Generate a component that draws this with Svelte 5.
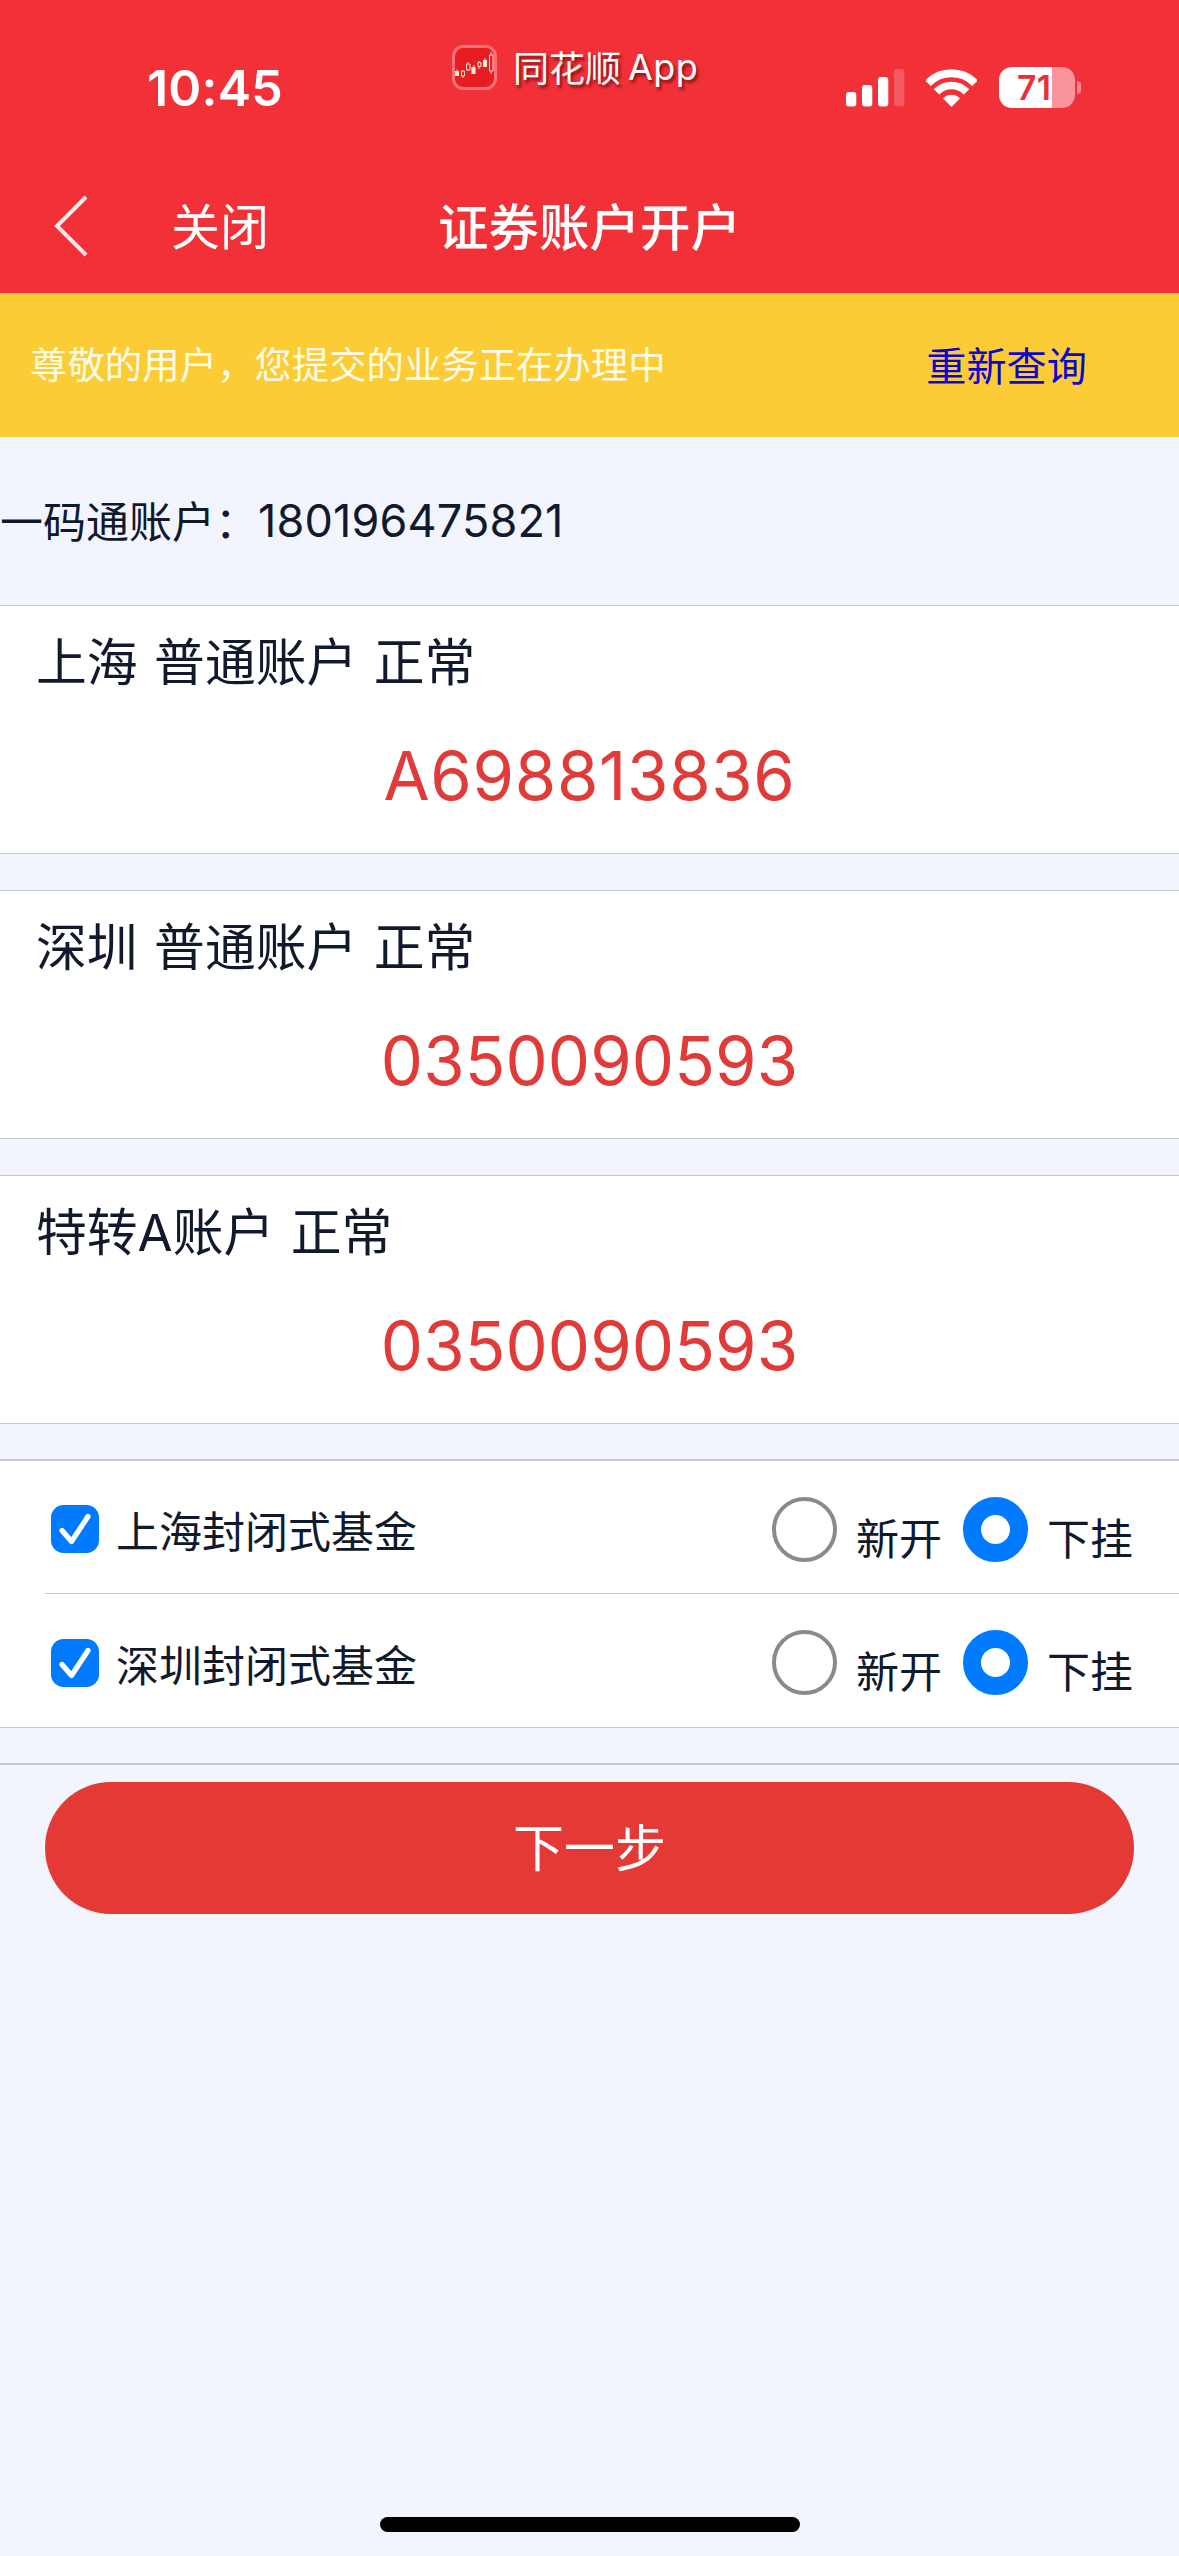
<script>
  const accounts = [
    { title: '上海 普通账户 正常', number: 'A698813836', spacing: 'wide' },
    { title: '深圳 普通账户 正常', number: '0350090593', spacing: '' },
    { title: '特转A账户 正常', number: '0350090593', spacing: '' }
  ];
  const funds = ['上海封闭式基金', '深圳封闭式基金'];
</script>

<div class="screen">
  <header>
    <div class="status">
      <div class="time">10:45</div>
      <div class="return-app">
        <svg width="45" height="45" viewBox="0 0 45 45">
          <rect x="1.5" y="1.5" width="42" height="42" rx="10" fill="#e81d22" stroke="#ff7078" stroke-width="3" />
          <path d="M5 26V24.5M11 25v8M16 17v9M22 20v9M27 16v8M33 13v9M39 7v22" stroke="#ffd9c8" stroke-width="1" />
          <g fill="#fff0de"><path d="M3 26h4v5H3zM19.500 22h4v7h-4zM31 15h4v7h-4z" /></g>
          <g fill="#e81d22" stroke="#ffe5d8" stroke-width="1"><path d="M9.500 26h3v5h-3zM14.500 19h3.500v6h-3.500zM26 17.500h3v4h-3zM37.500 10h3.500v16h-3.500z" /></g>
        </svg>
        <span class="app-cn">同花顺</span><span class="app-en">App</span>
      </div>
      <div class="indicators">
        <svg width="59" height="38" viewBox="0 0 59 38">
          <g fill="#fff">
            <rect x="0" y="23" width="10.300" height="14.500" rx="3" />
            <rect x="16" y="16" width="10.300" height="21.500" rx="3" />
            <rect x="32" y="8" width="10.300" height="29.500" rx="3" />
            <rect x="48" y="0" width="10.300" height="37.500" rx="3" opacity=".2" />
          </g>
        </svg>
        <svg class="wifi" width="51" height="38" viewBox="0 0 51 38">
          <defs>
            <clipPath id="fan"><path d="M25.500 38L-3 9.300V-5H54V9.300Z" /></clipPath>
          </defs>
          <g clip-path="url(#fan)" fill="none" stroke="#fff">
            <circle cx="25.500" cy="37" r="32.800" stroke-width="8" />
            <circle cx="25.500" cy="37" r="20.500" stroke-width="7.600" />
            <circle cx="25.500" cy="37" r="5.600" stroke-width="11.200" />
          </g>
        </svg>
        <div class="battery"><span>71</span></div>
        <div class="nub"></div>
      </div>
    </div>
    <nav>
      <svg width="36" height="62" viewBox="0 0 36 62"><path d="M32 2L3 31L32 60" fill="none" stroke="#ffe9e9" stroke-width="4" /></svg>
      <span class="close">关闭</span>
      <h1>证券账户开户</h1>
    </nav>
  </header>

  <section class="notice">
    <span class="message">尊敬的用户，您提交的业务正在办理中</span>
    <a href="#refresh">重新查询</a>
  </section>

  <section class="master"><span class="label">一码通账户：</span><span class="digits">180196475821</span></section>

  <main>
    {#each accounts as account}
      <section class="card">
        <h2>{account.title}</h2>
        <div class="number {account.spacing}">{account.number}</div>
      </section>
    {/each}
  </main>

  <section class="funds">
    {#each funds as fund}
      <div class="fund">
        <svg class="check" width="48" height="48" viewBox="0 0 48 48">
          <rect width="48" height="48" rx="12.500" fill="#007aff" />
          <path d="M11 25.500L20.500 36.500L37 11.500" fill="none" stroke="#fff" stroke-width="5.200" stroke-linecap="round" stroke-linejoin="round" />
        </svg>
        <span class="fund-name">{fund}</span>
        <i class="radio"></i><span class="option">新开</span>
        <i class="radio on"></i><span class="option last">下挂</span>
      </div>
    {/each}
  </section>

  <footer>
    <button>下一步</button>
  </footer>
  <div class="home"></div>
</div>

<style>
  :global(body) { margin: 0; background: #f2f5fd; }
  * { box-sizing: border-box; }
  .screen {
    width: 1179px;
    height: 2556px;
    display: flex;
    flex-direction: column;
    background: #f2f5fd;
    color: #11192d;
    font-family: Inter, "Noto Sans CJK SC", sans-serif;
    overflow: hidden;
  }
  svg { display: block; flex: none; }
  span, h1, h2 { white-space: nowrap; }
  header { height: 293px; background: #f13038; color: #fff; }
  .status { height: 176px; display: flex; align-items: flex-start; }
  .time {
    width: 304px;
    padding: 58px 0 0 147px;
    font-size: 50px;
    line-height: 60px;
    font-weight: 600;
    letter-spacing: 0.2px;
  }
  .return-app {
    width: 394px;
    height: 45px;
    margin: 45px 0 0 148px;
    display: flex;
    align-items: center;
    font-size: 36px;
    line-height: 46px;
    text-shadow: 2px 3px 3px rgba(80, 0, 0, .65);
  }
  .app-cn { margin-left: 16px; padding-bottom: 4px; font-family: "Noto Sans CJK SC", sans-serif; }
  .app-en { margin-left: 7px; padding-bottom: 1px; letter-spacing: 0.4px; }
  .indicators { display: flex; align-items: center; margin-top: 67px; height: 41px; }
  .wifi { margin-left: 21px; }
  .battery {
    width: 76px;
    height: 41px;
    margin-left: 22px;
    border-radius: 13px;
    background: linear-gradient(90deg, #fff 0 53px, #f8959a 53px);
    color: #e83038;
    font-size: 33.500px;
    line-height: 42px;
    font-weight: 600;
    letter-spacing: 0.4px;
    padding-left: 18px;
  }
  .nub { width: 4px; height: 13px; margin-left: 2px; border-radius: 0 5px 5px 0; background: #f8878d; }
  nav {
    height: 100px;
    padding-left: 54px;
    display: flex;
    align-items: center;
    font-family: "Noto Sans CJK SC", sans-serif;
  }
  .close { margin-left: 81px; padding-bottom: 4px; font-size: 49px; line-height: 60px; }
  h1 { margin: 0 0 0 169px; padding-bottom: 4px; font-size: 50.500px; line-height: 60px; font-weight: 500; }
  .notice {
    height: 144px;
    padding: 0 92px 0 30px;
    display: flex;
    align-items: center;
    justify-content: space-between;
    background: #fbcc36;
    font-family: "Noto Sans CJK SC", sans-serif;
  }
  .message { padding-bottom: 4px; color: #fffbe6; font-size: 37.400px; line-height: 50px; }
  a { padding-bottom: 3px; color: #0d04cf; text-decoration: none; font-size: 40.200px; line-height: 50px; }
  .master { height: 168px; display: flex; align-items: center; }
  .label { width: 258px; padding-bottom: 5px; font-family: "Noto Sans CJK SC", sans-serif; font-size: 43px; line-height: 60px; }
  .digits { font-size: 45px; line-height: 60px; letter-spacing: 0.150px; }
  main { height: 854px; display: flex; flex-direction: column; gap: 36px; }
  .card {
    height: 249px;
    flex: none;
    border: solid #c7c7cc;
    border-width: 1px 0;
    background: #fff;
  }
  h2 { margin: 27px 0 0 36px; font-size: 50.800px; line-height: 60px; font-weight: 400; word-spacing: 2.200px; }
  .number { margin-top: 48px; text-align: center; color: #e03b38; font-size: 67px; line-height: 70px; letter-spacing: 0.100px; }
  .wide { letter-spacing: 0.700px; }
  .funds { height: 269px; border: solid #c7c7cc; border-width: 2px 0 1px; background: #fff; }
  .fund {
    height: 132px;
    margin-left: 45px;
    padding: 4px 0 0 6px;
    display: flex;
    align-items: center;
    font-family: "Noto Sans CJK SC", sans-serif;
  }
  .fund + .fund { height: 134px; border-top: 1px solid #c7c7cc; }
  .fund-name { width: 656px; margin-left: 17px; font-size: 43px; line-height: 60px; }
  .radio { width: 65px; height: 65px; flex: none; border: 4px solid #8a8a8d; border-radius: 50%; }
  .radio.on { margin-left: 24px; border: 18.500px solid #007aff; }
  .option { width: 84px; margin-left: 19px; padding-top: 13px; font-size: 43px; line-height: 60px; }
  .radio.on { margin-left: 23px; }
  .last { margin-left: 19px; }
  footer { height: 151px; margin-top: 35px; padding: 17px 45px 0; border-top: 2px solid #c7c7cc; }
  button {
    width: 100%;
    height: 132px;
    padding: 0 0 6px;
    border: 0;
    border-radius: 66px;
    background: #e53935;
    color: #fff;
    font: 400 51px/60px "Noto Sans CJK SC", sans-serif;
  }
  .home { width: 420px; height: 15px; margin: auto auto 24px; border-radius: 8px; background: #000; }
</style>
